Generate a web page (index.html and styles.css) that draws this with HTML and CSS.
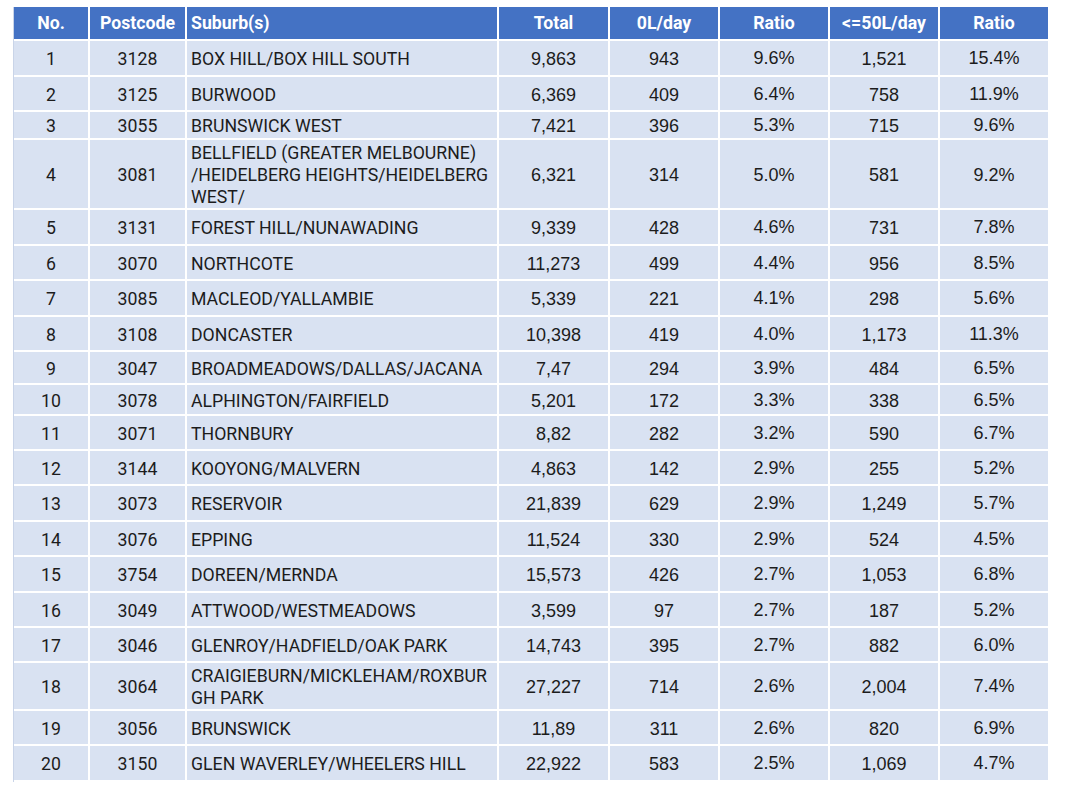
FILE: index.html
```html
<!DOCTYPE html>
<html lang="en">
<head>
<meta charset="utf-8">
<title>Postcode water usage table</title>
<link rel="stylesheet" href="styles.css">
</head>
<body>
<table class="data">
  <colgroup>
    <col class="c-no"><col class="c-pc"><col class="c-sub"><col class="c-tot">
    <col class="c-num"><col class="c-num"><col class="c-num"><col class="c-num">
  </colgroup>
  <thead>
    <tr class="hdr">
      <th>No.</th><th>Postcode</th><th class="left">Suburb(s)</th><th>Total</th>
      <th>0L/day</th><th>Ratio</th><th>&lt;=50L/day</th><th>Ratio</th>
    </tr>
  </thead>
  <tbody>
    <tr class="h36"><td>1</td><td>3128</td><td class="sub">BOX HILL/BOX HILL SOUTH</td><td class="n">9,863</td><td class="n">943</td><td class="n r">9.6%</td><td class="n">1,521</td><td class="n r">15.4%</td></tr>
    <tr><td>2</td><td>3125</td><td class="sub">BURWOOD</td><td class="n">6,369</td><td class="n">409</td><td class="n r">6.4%</td><td class="n">758</td><td class="n r">11.9%</td></tr>
    <tr class="h28"><td>3</td><td>3055</td><td class="sub">BRUNSWICK WEST</td><td class="n">7,421</td><td class="n">396</td><td class="n r">5.3%</td><td class="n">715</td><td class="n r">9.6%</td></tr>
    <tr class="h70"><td>4</td><td>3081</td><td class="sub">BELLFIELD (GREATER MELBOURNE)<br>/HEIDELBERG HEIGHTS/HEIDELBERG<br>WEST/</td><td class="n">6,321</td><td class="n">314</td><td class="n">5.0%</td><td class="n">581</td><td class="n">9.2%</td></tr>
    <tr class="h36"><td>5</td><td>3131</td><td class="sub">FOREST HILL/NUNAWADING</td><td class="n">9,339</td><td class="n">428</td><td class="n r">4.6%</td><td class="n">731</td><td class="n r">7.8%</td></tr>
    <tr><td>6</td><td>3070</td><td class="sub">NORTHCOTE</td><td class="n">11,273</td><td class="n">499</td><td class="n r">4.4%</td><td class="n">956</td><td class="n r">8.5%</td></tr>
    <tr class="h36"><td>7</td><td>3085</td><td class="sub">MACLEOD/YALLAMBIE</td><td class="n">5,339</td><td class="n">221</td><td class="n r">4.1%</td><td class="n">298</td><td class="n r">5.6%</td></tr>
    <tr><td>8</td><td>3108</td><td class="sub">DONCASTER</td><td class="n">10,398</td><td class="n">419</td><td class="n r">4.0%</td><td class="n">1,173</td><td class="n r">11.3%</td></tr>
    <tr class="h33"><td>9</td><td>3047</td><td class="sub">BROADMEADOWS/DALLAS/JACANA</td><td class="n">7,47</td><td class="n">294</td><td class="n r">3.9%</td><td class="n">484</td><td class="n r">6.5%</td></tr>
    <tr class="h31"><td>10</td><td>3078</td><td class="sub">ALPHINGTON/FAIRFIELD</td><td class="n">5,201</td><td class="n">172</td><td class="n r">3.3%</td><td class="n">338</td><td class="n r">6.5%</td></tr>
    <tr><td>11</td><td>3071</td><td class="sub">THORNBURY</td><td class="n">8,82</td><td class="n">282</td><td class="n r">3.2%</td><td class="n">590</td><td class="n r">6.7%</td></tr>
    <tr><td>12</td><td>3144</td><td class="sub">KOOYONG/MALVERN</td><td class="n">4,863</td><td class="n">142</td><td class="n r">2.9%</td><td class="n">255</td><td class="n r">5.2%</td></tr>
    <tr class="h36"><td>13</td><td>3073</td><td class="sub">RESERVOIR</td><td class="n">21,839</td><td class="n">629</td><td class="n r">2.9%</td><td class="n">1,249</td><td class="n r">5.7%</td></tr>
    <tr><td>14</td><td>3076</td><td class="sub">EPPING</td><td class="n">11,524</td><td class="n">330</td><td class="n r">2.9%</td><td class="n">524</td><td class="n r">4.5%</td></tr>
    <tr class="h36"><td>15</td><td>3754</td><td class="sub">DOREEN/MERNDA</td><td class="n">15,573</td><td class="n">426</td><td class="n r">2.7%</td><td class="n">1,053</td><td class="n r">6.8%</td></tr>
    <tr><td>16</td><td>3049</td><td class="sub">ATTWOOD/WESTMEADOWS</td><td class="n">3,599</td><td class="n">97</td><td class="n r">2.7%</td><td class="n">187</td><td class="n r">5.2%</td></tr>
    <tr><td>17</td><td>3046</td><td class="sub">GLENROY/HADFIELD/OAK PARK</td><td class="n">14,743</td><td class="n">395</td><td class="n r">2.7%</td><td class="n">882</td><td class="n r">6.0%</td></tr>
    <tr class="h48"><td>18</td><td>3064</td><td class="sub">CRAIGIEBURN/MICKLEHAM/ROXBUR<br>GH PARK</td><td class="n">27,227</td><td class="n">714</td><td class="n r">2.6%</td><td class="n">2,004</td><td class="n r">7.4%</td></tr>
    <tr><td>19</td><td>3056</td><td class="sub">BRUNSWICK</td><td class="n">11,89</td><td class="n">311</td><td class="n r">2.6%</td><td class="n">820</td><td class="n r">6.9%</td></tr>
    <tr class="h36"><td>20</td><td>3150</td><td class="sub">GLEN WAVERLEY/WHEELERS HILL</td><td class="n">22,922</td><td class="n">583</td><td class="n r">2.5%</td><td class="n">1,069</td><td class="n r">4.7%</td></tr>
  </tbody>
</table>
</body>
</html>
```

FILE: styles.css
```css
html, body {
  margin: 0;
  padding: 0;
  background: #ffffff;
}

body {
  padding: 7px 0 0 13px;
  font-family: Roboto, "Liberation Sans", sans-serif;
  color: #1c1c1c;
}

.data {
  border-collapse: separate;
  border-spacing: 0;
  table-layout: fixed;
  width: 1037px;
  border-left: 1px solid #c9d4e8;
}

.c-no { width: 76px; }
.c-pc { width: 97px; }
.c-sub { width: 312px; }
.c-tot { width: 111px; }
.c-num { width: 110px; }

.data th,
.data td {
  padding: 0;
  border-right: 2px solid #ffffff;
  border-bottom: 2px solid #ffffff;
  text-align: center;
  vertical-align: middle;
  white-space: nowrap;
}

.data th {
  background: #4472c4;
  color: #ffffff;
  font-weight: 700;
  font-size: 17.7px;
  line-height: 20px;
}

.data th.left {
  text-align: left;
  padding-left: 4px;
}

.data td {
  background: #d9e2f2;
  font-size: 17.7px;
  line-height: 22px;
  padding-top: 2px;
}

.data td.sub {
  text-align: left;
  padding-left: 4px;
}

.data td.n {
  font-family: "Liberation Sans", Arial, sans-serif;
  font-size: 18px;
}

.data td.r {
  padding-top: 0;
}

.hdr { height: 34px; }
.data tbody tr { height: 35px; }
.data tbody tr.h36 { height: 36px; }
.data tbody tr.h28 { height: 28px; }
.data tbody tr.h70 { height: 70px; }
.data tbody tr.h33 { height: 33px; }
.data tbody tr.h31 { height: 31px; }
.data tbody tr.h48 { height: 48px; }
```
